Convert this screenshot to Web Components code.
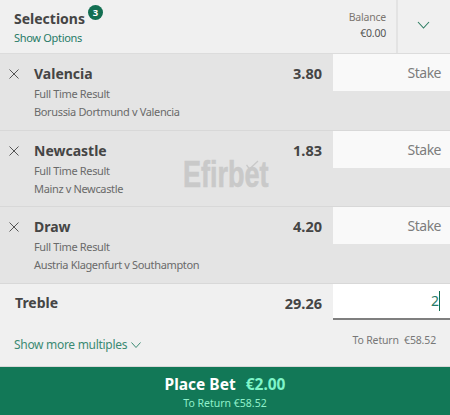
<!DOCTYPE html>
<html>
<head>
<meta charset="utf-8">
<style>
  html, body { margin: 0; padding: 0; }
  body { width: 450px; height: 415px; overflow: hidden; background: #f0f0f0; font-family: "Noto Sans", "Open Sans", sans-serif; }
</style>
</head>
<body>
<bet-slip>
  <slip-header></slip-header>
  <slip-selection name="Valencia" odds="3.80" market="Full Time Result" fixture="Borussia Dortmund v Valencia"></slip-selection>
  <slip-selection name="Newcastle" odds="1.83" market="Full Time Result" fixture="Mainz v Newcastle"></slip-selection>
  <slip-selection name="Draw" odds="4.20" market="Full Time Result" fixture="Austria Klagenfurt v Southampton"></slip-selection>
  <slip-multiple name="Treble" odds="29.26" stake="2" returns="€58.52"></slip-multiple>
  <place-bet amount="€2.00" returns="€58.52"></place-bet>
</bet-slip>
<script>
class BetSlip extends HTMLElement {
  constructor() {
    super();
    this.attachShadow({ mode: 'open' });
  }

  connectedCallback() {
    this.shadowRoot.innerHTML = `
      <style>
        :host { display: flex; flex-direction: column; position: relative; width: 450px; height: 415px; }
        .mark {
          position: absolute; left: 183px; top: 154px;
          font: 700 37px/42px "Liberation Sans", sans-serif;
          -webkit-text-stroke: .6px #c9c9c9;
          color: #c9c9c9;
          transform: scaleX(.73);
          transform-origin: left top;
        }
        svg { position: absolute; left: 246px; top: 160px; }
      </style>
      <slot></slot>
      <div class="mark">Efirbet</div>
      <svg width="13" height="10" viewBox="0 0 13 10" fill="none" stroke="#c9c9c9" stroke-width="1.3"><path d="M.5 5l3 4L12 1"/></svg>
    `;
  }
}

class SlipHeader extends HTMLElement {
  constructor() {
    super();
    this.attachShadow({ mode: 'open' });
  }

  connectedCallback() {
    this.shadowRoot.innerHTML = `
      <style>
        :host { display: flex; height: 54px; background: #f0f0f0; border-bottom: 1px solid #dcdcdc; flex: none; box-sizing: border-box; }
        .left { flex: 1; padding: 9px 0 0 14px; }
        .title { display: flex; color: #454545; font-size: 14px; font-weight: 700; line-height: 20px; }
        .badge {
          width: 15px; height: 15px; border-radius: 50%; background: #126e51; color: #fff;
          font-size: 9.500px; line-height: 15px; text-align: center; margin: -4px 0 0 3px;
        }
        .options { color: #277b67; font-size: 11px; letter-spacing: -.3px; line-height: 16px; margin-top: 1px; }
        .balance { padding: 9px 10px 0 0; text-align: right; font-size: 10.500px; line-height: 16px; color: #7c7670; letter-spacing: -.2px; }
        .balance b { display: block; font-weight: 400; color: #545454; }
        .toggle { width: 54px; border-left: 2px solid #e3e3e3; display: flex; align-items: center; justify-content: center; box-sizing: border-box; padding: 0 1px 3px 0; }
      </style>
      <div class="left">
        <div class="title">Selections<span class="badge">3</span></div>
        <div class="options">Show Options</div>
      </div>
      <div class="balance">Balance<b>€0.00</b></div>
      <div class="toggle"><svg width="13" height="8" viewBox="0 0 13 8" fill="none" stroke="#2c7d62" stroke-width="1.1"><path d="M1 1l5.5 6L12 1"/></svg></div>
    `;
  }
}

class SlipSelection extends HTMLElement {
  constructor() {
    super();
    this.attachShadow({ mode: 'open' });
  }

  connectedCallback() {
    const name = this.getAttribute('name');
    const odds = this.getAttribute('odds');
    const market = this.getAttribute('market');
    const fixture = this.getAttribute('fixture');
    this.shadowRoot.innerHTML = `
      <style>
        :host { display: flex; height: 76.500px; flex: none; background: #e4e4e4; border-bottom: 1px solid #d8d8d8; box-sizing: border-box; }
        .close { width: 34px; padding: 15px 0 0 9px; box-sizing: border-box; }
        .info { flex: 1; padding-top: 9px; }
        .name { color: #454545; font-size: 14px; font-weight: 700; line-height: 22px; }
        .sub { color: #6a6a6a; font-size: 11px; letter-spacing: -.35px; line-height: 18px; }
        .odds { color: #454545; font-size: 14.500px; font-weight: 700; line-height: 22px; padding: 8px 11px 0 0; }
        .stake {
          width: 117px; height: 37px; background: #f9f9f9; color: #7d7d7d; font-size: 14px; letter-spacing: -.5px;
          line-height: 37px; text-align: right; padding-right: 9px; box-sizing: border-box;
        }
      </style>
      <div class="close"><svg width="10" height="10" viewBox="0 0 10 10" fill="none" stroke="#555" stroke-width="1" style="display:block"><path d="M.5.5l9 9M9.500.5l-9 9"/></svg></div>
      <div class="info">
        <div class="name">${name}</div>
        <div class="sub">${market}</div>
        <div class="sub">${fixture}</div>
      </div>
      <div class="odds">${odds}</div>
      <div class="stake">Stake</div>
    `;
  }
}

class SlipMultiple extends HTMLElement {
  constructor() {
    super();
    this.attachShadow({ mode: 'open' });
  }

  connectedCallback() {
    const name = this.getAttribute('name');
    const odds = this.getAttribute('odds');
    const stake = this.getAttribute('stake');
    const returns = this.getAttribute('returns');
    this.shadowRoot.innerHTML = `
      <style>
        :host { display: flex; flex-direction: column; height: 83px; flex: none; background: #f0f0f0; border-bottom: 1px solid #d8d8d8; box-sizing: border-box; }
        .top { display: flex; height: 36px; }
        .name { flex: 1; color: #454545; font-size: 14px; font-weight: 700; line-height: 38px; padding-left: 15px; }
        .odds { color: #454545; font-size: 14.500px; font-weight: 700; line-height: 38px; padding-right: 11px; }
        .input {
          width: 117px; background: #fff; border-bottom: 2px solid #7f7f7f; box-sizing: border-box;
          display: flex; justify-content: flex-end; align-items: center; padding-right: 10px;
          color: #277b67; font-size: 14px;
        }
        .caret { width: 1px; height: 20px; background: #126e51; }
        .bottom { display: flex; justify-content: space-between; padding: 12px 14px 0 14px; }
        .more { color: #3b8a73; font-size: 12px; letter-spacing: -.3px; line-height: 18px; margin-top: 4px; display: flex; align-items: center; gap: 4px; }
        .returns { color: #777; font-size: 10.500px; letter-spacing: -.15px; line-height: 16px; }
      </style>
      <div class="top">
        <div class="name">${name}</div>
        <div class="odds">${odds}</div>
        <div class="input">${stake}<span class="caret"></span></div>
      </div>
      <div class="bottom">
        <div class="more">Show more multiples <svg width="10" height="6" viewBox="0 0 10 6" fill="none" stroke="#3b8a73" stroke-width="1"><path d="M.5.5L5 5.500 9.500.5"/></svg></div>
        <div class="returns">To Return&nbsp; ${returns}</div>
      </div>
    `;
  }
}

class PlaceBet extends HTMLElement {
  constructor() {
    super();
    this.attachShadow({ mode: 'open' });
  }

  connectedCallback() {
    const amount = this.getAttribute('amount');
    const returns = this.getAttribute('returns');
    this.shadowRoot.innerHTML = `
      <style>
        :host { display: block; flex: 1; background: #127857; text-align: center; padding-top: 7px; box-sizing: border-box; }
        .main { color: #fff; font-size: 15.500px; font-weight: 700; line-height: 21px; }
        .main span { color: #7ff5c9; margin-left: 6px; }
        .sub { color: #8ff0ca; font-size: 10.500px; line-height: 16px; }
      </style>
      <div class="main">Place Bet <span>${amount}</span></div>
      <div class="sub">To Return ${returns}</div>
    `;
  }
}

customElements.define('bet-slip', BetSlip);
customElements.define('slip-header', SlipHeader);
customElements.define('slip-selection', SlipSelection);
customElements.define('slip-multiple', SlipMultiple);
customElements.define('place-bet', PlaceBet);
</script>
</body>
</html>
